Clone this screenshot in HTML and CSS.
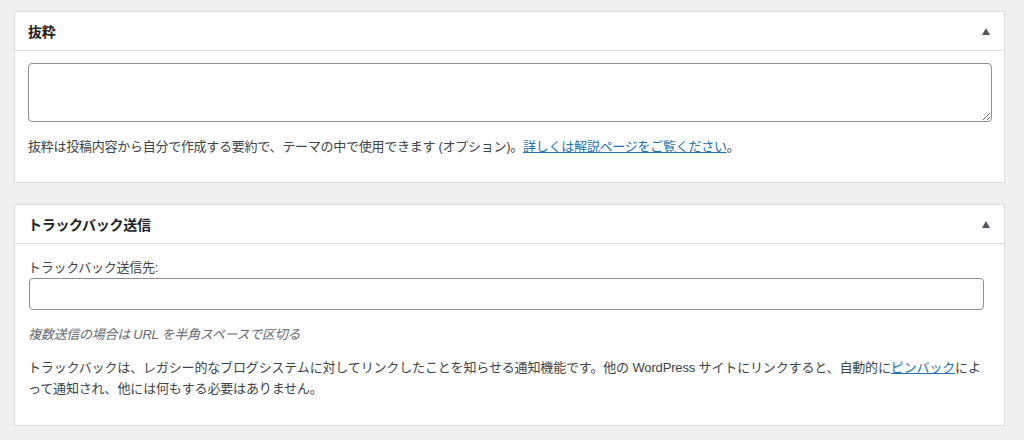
FILE: index.html
```html
<!DOCTYPE html>
<html lang="ja">

<head>
    <meta charset="UTF-8">
    <title>抜粋 / トラックバック送信</title>
    <link rel="stylesheet" href="styles.css">
</head>

<body>
    <div class="metabox-holder">
        <div class="postbox">
            <div class="postbox-header">
                <h2>抜粋</h2>
                <button type="button" class="toggle" aria-label="パネルを切り替え"><span class="arrow"></span></button>
            </div>
            <div class="inside excerpt">
                <textarea rows="3" cols="40"></textarea>
                <p>抜粋は投稿内容から自分で作成する要約で、テーマの中で使用できます (オプション)。<a href="#">詳しくは解説ページをご覧ください</a>。</p>
            </div>
        </div>

        <div class="postbox">
            <div class="postbox-header">
                <h2>トラックバック送信</h2>
                <button type="button" class="toggle" aria-label="パネルを切り替え"><span class="arrow"></span></button>
            </div>
            <div class="inside trackback">
                <label for="trackback_url">トラックバック送信先:</label>
                <input type="text" id="trackback_url" name="trackback_url">
                <p class="howto">複数送信の場合は URL を半角スペースで区切る</p>
                <p class="desc">トラックバックは、レガシー的なブログシステムに対してリンクしたことを知らせる通知機能です。他の WordPress サイトにリンクすると、自動的に<a href="#">ピンバック</a>によって通知され、他には何もする必要はありません。</p>
            </div>
        </div>
    </div>
</body>

</html>
```

FILE: styles.css
```css
body {
    margin: 0;
    background-color: #f0f0f1;
    font-family: "Liberation Sans", "Noto Sans CJK JP", sans-serif;
    font-size: 13px;
    color: #3c434a;
}

.metabox-holder {
    padding: 11px 19px 0 14px;
}

.postbox {
    background-color: #fff;
    border: 1px solid #dcdcde;
    margin-bottom: 21px;
}

.postbox-header {
    display: flex;
    align-items: center;
    justify-content: space-between;
    height: 38px;
    border-bottom: 1px solid #dcdcde;
    padding: 0 0 0 13px;
}

.postbox-header h2 {
    margin: 0;
    font-size: 14px;
    font-weight: 600;
    color: #1d2327;
    letter-spacing: -0.3px;
}

.toggle {
    width: 36px;
    height: 36px;
    border: none;
    background: none;
    padding: 0;
    display: flex;
    align-items: center;
    justify-content: center;
}

.arrow {
    width: 0;
    height: 0;
    border-left: 4.5px solid transparent;
    border-right: 4.5px solid transparent;
    border-bottom: 7px solid #50575e;
}

.inside {
    padding: 12px 12px 0 13px;
    letter-spacing: -0.26px;
}

.excerpt textarea {
    display: block;
    width: 100%;
    height: 59px;
    box-sizing: border-box;
    border: 1px solid #8c8f94;
    border-radius: 4px;
    margin: 0;
    font-family: inherit;
}

.excerpt p {
    margin: 14px 0 0;
    line-height: 21px;
    height: 46px;
}

a {
    color: #2271b1;
}

.trackback {
    padding-top: 15px;
    padding-right: 21px;
    padding-bottom: 26px;
}

.trackback label {
    display: block;
    line-height: 18px;
}

.trackback input {
    display: block;
    width: 100%;
    height: 32px;
    box-sizing: border-box;
    margin: 1px 0 0 1px;
    border: 1px solid #8c8f94;
    border-radius: 4px;
}

.howto {
    margin: 14px 0 0;
    font-style: italic;
    color: #646970;
    line-height: 21px;
}

.desc {
    margin: 12px 0 0;
    line-height: 21px;
    letter-spacing: -0.15px;
}
```
